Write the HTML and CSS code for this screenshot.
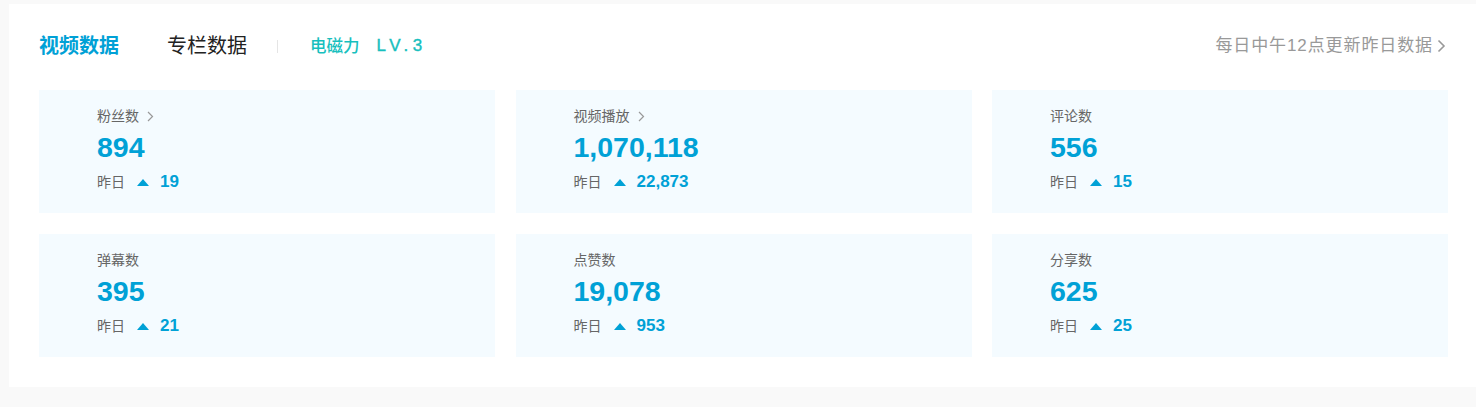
FILE: index.html
```html
<!DOCTYPE html>
<html lang="zh">
<head>
<meta charset="utf-8">
<link rel="stylesheet" href="styles.css">
</head>
<body>
<div class="panel">
  <div class="header">
    <div class="tabs">
      <span class="tab active">视频数据</span>
      <span class="tab">专栏数据</span>
      <span class="divider"></span>
      <span class="power">电磁力<span class="lv">LV.3</span></span>
    </div>
    <div class="update">每日中午12点更新昨日数据<svg class="chev-big" width="9" height="14" viewBox="0 0 9 14"><polyline points="1.5,1.5 7,7 1.5,12.5" fill="none" stroke="#999" stroke-width="1.6"/></svg></div>
  </div>
  <div class="grid">
    <div class="card">
      <div class="label">粉丝数<svg class="chev" width="7" height="11" viewBox="0 0 7 11"><polyline points="1,1 5.5,5.5 1,10" fill="none" stroke="#999" stroke-width="1.2"/></svg></div>
      <div class="num">894</div>
      <div class="delta"><span class="yd">昨日</span><span class="tri"></span><span class="dv">19</span></div>
    </div>
    <div class="card">
      <div class="label">视频播放<svg class="chev" width="7" height="11" viewBox="0 0 7 11"><polyline points="1,1 5.5,5.5 1,10" fill="none" stroke="#999" stroke-width="1.2"/></svg></div>
      <div class="num">1,070,118</div>
      <div class="delta"><span class="yd">昨日</span><span class="tri"></span><span class="dv">22,873</span></div>
    </div>
    <div class="card">
      <div class="label">评论数</div>
      <div class="num">556</div>
      <div class="delta"><span class="yd">昨日</span><span class="tri"></span><span class="dv">15</span></div>
    </div>
    <div class="card">
      <div class="label">弹幕数</div>
      <div class="num">395</div>
      <div class="delta"><span class="yd">昨日</span><span class="tri"></span><span class="dv">21</span></div>
    </div>
    <div class="card">
      <div class="label">点赞数</div>
      <div class="num">19,078</div>
      <div class="delta"><span class="yd">昨日</span><span class="tri"></span><span class="dv">953</span></div>
    </div>
    <div class="card">
      <div class="label">分享数</div>
      <div class="num">625</div>
      <div class="delta"><span class="yd">昨日</span><span class="tri"></span><span class="dv">25</span></div>
    </div>
  </div>
</div>
</body>
</html>
```
FILE: styles.css
```css
html, body {
  margin: 0;
  padding: 0;
}
body {
  background: #f9f9f9;
  overflow: hidden;
  font-family: "Liberation Sans", "Noto Sans CJK SC", sans-serif;
  width: 1476px;
  height: 407px;
}
.panel {
  background: #fff;
  margin: 4px 0 0 9px;
  width: 1469px;
  box-sizing: border-box;
  padding: 30px 30px 30px 30px;
}
.header {
  height: 24px;
  display: flex;
  align-items: center;
  justify-content: space-between;
  margin-bottom: 32px;
}
.tabs {
  display: flex;
  align-items: center;
}
.tab {
  font-size: 20px;
  line-height: 24px;
  color: #222;
  margin-right: 48px;
}
.tab + .tab {
  margin-right: 30px;
}
.tab.active {
  color: #00a1d6;
  font-weight: bold;
}
.divider {
  width: 1px;
  height: 13px;
  background: #e5e5e5;
  margin: 0 32px 0 0;
}
.power {
  color: #17bfbe;
  font-size: 16.5px;
  font-weight: 500;
  line-height: 24px;
  display: flex;
  align-items: center;
}
.lv {
  font-size: 17px;
  letter-spacing: 4.5px;
  margin-left: 17px;
  -webkit-text-stroke: 0.4px #17bfbe;
}
.update {
  color: #999;
  font-size: 17px;
  letter-spacing: 0.9px;
  line-height: 24px;
  display: flex;
  align-items: center;
  margin-right: 2px;
}
.chev-big {
  margin-left: 4px;
}
.grid {
  display: grid;
  grid-template-columns: repeat(3, 1fr);
  column-gap: 20.5px;
  row-gap: 21px;
}
.card {
  background: #f4fbff;
  height: 123px;
  box-sizing: border-box;
  padding: 16px 0 0 58px;
}
.label {
  font-size: 14px;
  line-height: 20px;
  color: #666;
  display: flex;
  align-items: center;
}
.chev {
  margin-left: 8px;
}
.num {
  margin-top: 5px;
  font-size: 28.5px;
  line-height: 32px;
  font-weight: bold;
  color: #00a1d6;
}
.delta {
  margin-top: 9px;
  display: flex;
  align-items: center;
  height: 20px;
}
.yd {
  font-size: 14px;
  color: #666;
  line-height: 20px;
}
.tri {
  width: 0;
  height: 0;
  border-left: 6px solid transparent;
  border-right: 6px solid transparent;
  border-bottom: 7px solid #00a1d6;
  margin-left: 12px;
  margin-right: 11px;
}
.dv {
  font-size: 17px;
  font-weight: bold;
  color: #00a1d6;
  line-height: 20px;
}
```
